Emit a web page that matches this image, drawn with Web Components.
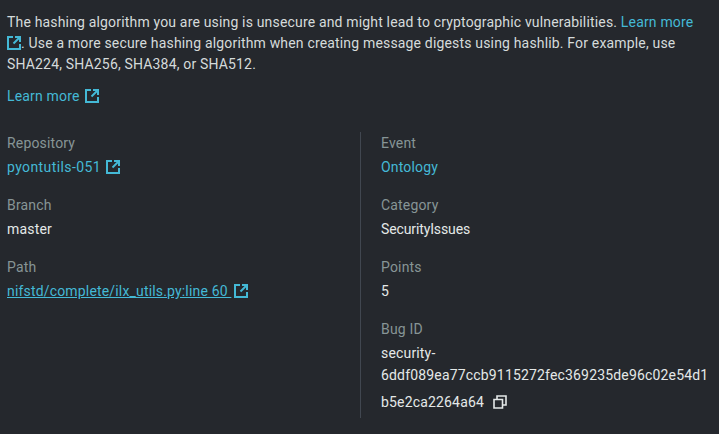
<!DOCTYPE html>
<html>
<head>
<meta charset="utf-8">
<style>
html, body { margin: 0; background: #25282d; }
body { font-family: Roboto, sans-serif; font-size: 14px; color: #d5dbdb; overflow: hidden; letter-spacing: 0.17px; }
</style>
</head>
<body>
<finding-details></finding-details>
<script>
const extIcon = `<svg class="ext" width="14" height="14" viewBox="0 0 14 14" fill="none" stroke="currentColor" stroke-width="2"><path d="M6 1H1v12h12V8"/><path d="M8 1h5v5"/><path d="M13 1L6.5 7.5"/></svg>`;

class ExtLink extends HTMLElement {
    constructor(){
        super();
        this.shadowDOM = this.attachShadow({mode:"open"});
        this.shadowDOM.innerHTML = `
            <style>
            :host { display: inline; color: #44b9d6; }
            a { color: inherit; text-decoration: none; }
            :host([underline]) a { text-decoration: underline; }
            .ext { vertical-align: -2px; margin-left: var(--icon-gap, 5px); }
            </style>
            <a href="#"><slot></slot></a>${extIcon}`;
    }
}
customElements.define("ext-link", ExtLink);

class KeyValue extends HTMLElement {
    constructor(){
        super();
        this.shadowDOM = this.attachShadow({mode:"open"});
        this.shadowDOM.innerHTML = `
            <style>
            :host { display: block; margin-bottom: 16px; }
            .label { color: #879596; line-height: 22px; margin-bottom: 2px; }
            .value { color: #e4e8e8; line-height: 22px; word-break: break-word; }
            </style>
            <div class="label">${this.getAttribute("label")}</div>
            <div class="value"><slot></slot></div>`;
    }
}
customElements.define("key-value", KeyValue);

class FindingDetails extends HTMLElement {
    constructor(){
        super();
        this.shadowDOM = this.attachShadow({mode:"open"});
        this.shadowDOM.innerHTML = `
            <style>
            :host { display: block; padding: 12px 7px 0; width: 705px; }
            p { margin: 0; line-height: 21px; max-width: 699px; }
            p ext-link { --icon-gap: 0; }
            .more { margin-top: 10px; line-height: 22px; }
            .grid { display: grid; grid-template-columns: 353px 1fr; margin-top: 25px; }
            .right { border-left: 1px solid #414750; padding-left: 20px; padding-bottom: 5px; }
            .right key-value:last-child { margin-bottom: 0; }
            .plain { color: #44b9d6; }
            .wide { letter-spacing: 0.4px; }
            .tight { letter-spacing: -0.12px; }
            .path { --icon-gap: 3px; }
            .id { display: block; width: 340px; }
            .last { display: block; margin-top: 5px; }
            .copy { vertical-align: -2px; margin-left: 9px; }
            </style>
            <p>The hashing algorithm you are using is unsecure and might lead to cryptographic vulnerabilities. <ext-link>Learn more</ext-link>. Use a more secure hashing algorithm when creating message digests using hashlib. For example, use SHA224, SHA256, SHA384, or SHA512.</p>
            <div class="more"><ext-link>Learn more</ext-link></div>
            <div class="grid">
                <div class="left">
                    <key-value label="Repository"><ext-link class="wide">pyontutils-051</ext-link></key-value>
                    <key-value label="Branch">master</key-value>
                    <key-value label="Path"><ext-link class="path" underline>nifstd/complete/ilx_utils.py:line 60&nbsp;</ext-link></key-value>
                </div>
                <div class="right">
                    <key-value label="Event"><span class="plain">Ontology</span></key-value>
                    <key-value label="Category"><span class="tight">SecurityIssues</span></key-value>
                    <key-value label="Points">5</key-value>
                    <key-value label="Bug ID"><span class="id">security-<br>6ddf089ea77ccb9115272fec369235de96c02e54d1</span><span class="last">b5e2ca2264a64<svg class="copy" width="14" height="14" viewBox="0 0 14 14" fill="none" stroke="currentColor" stroke-width="1.6"><path d="M1 4.5h8.5V13H1z"/><path d="M4 4V1h9v9h-3"/></svg></span></key-value>
                </div>
            </div>`;
    }
}
customElements.define("finding-details", FindingDetails);
</script>
</body>
</html>
